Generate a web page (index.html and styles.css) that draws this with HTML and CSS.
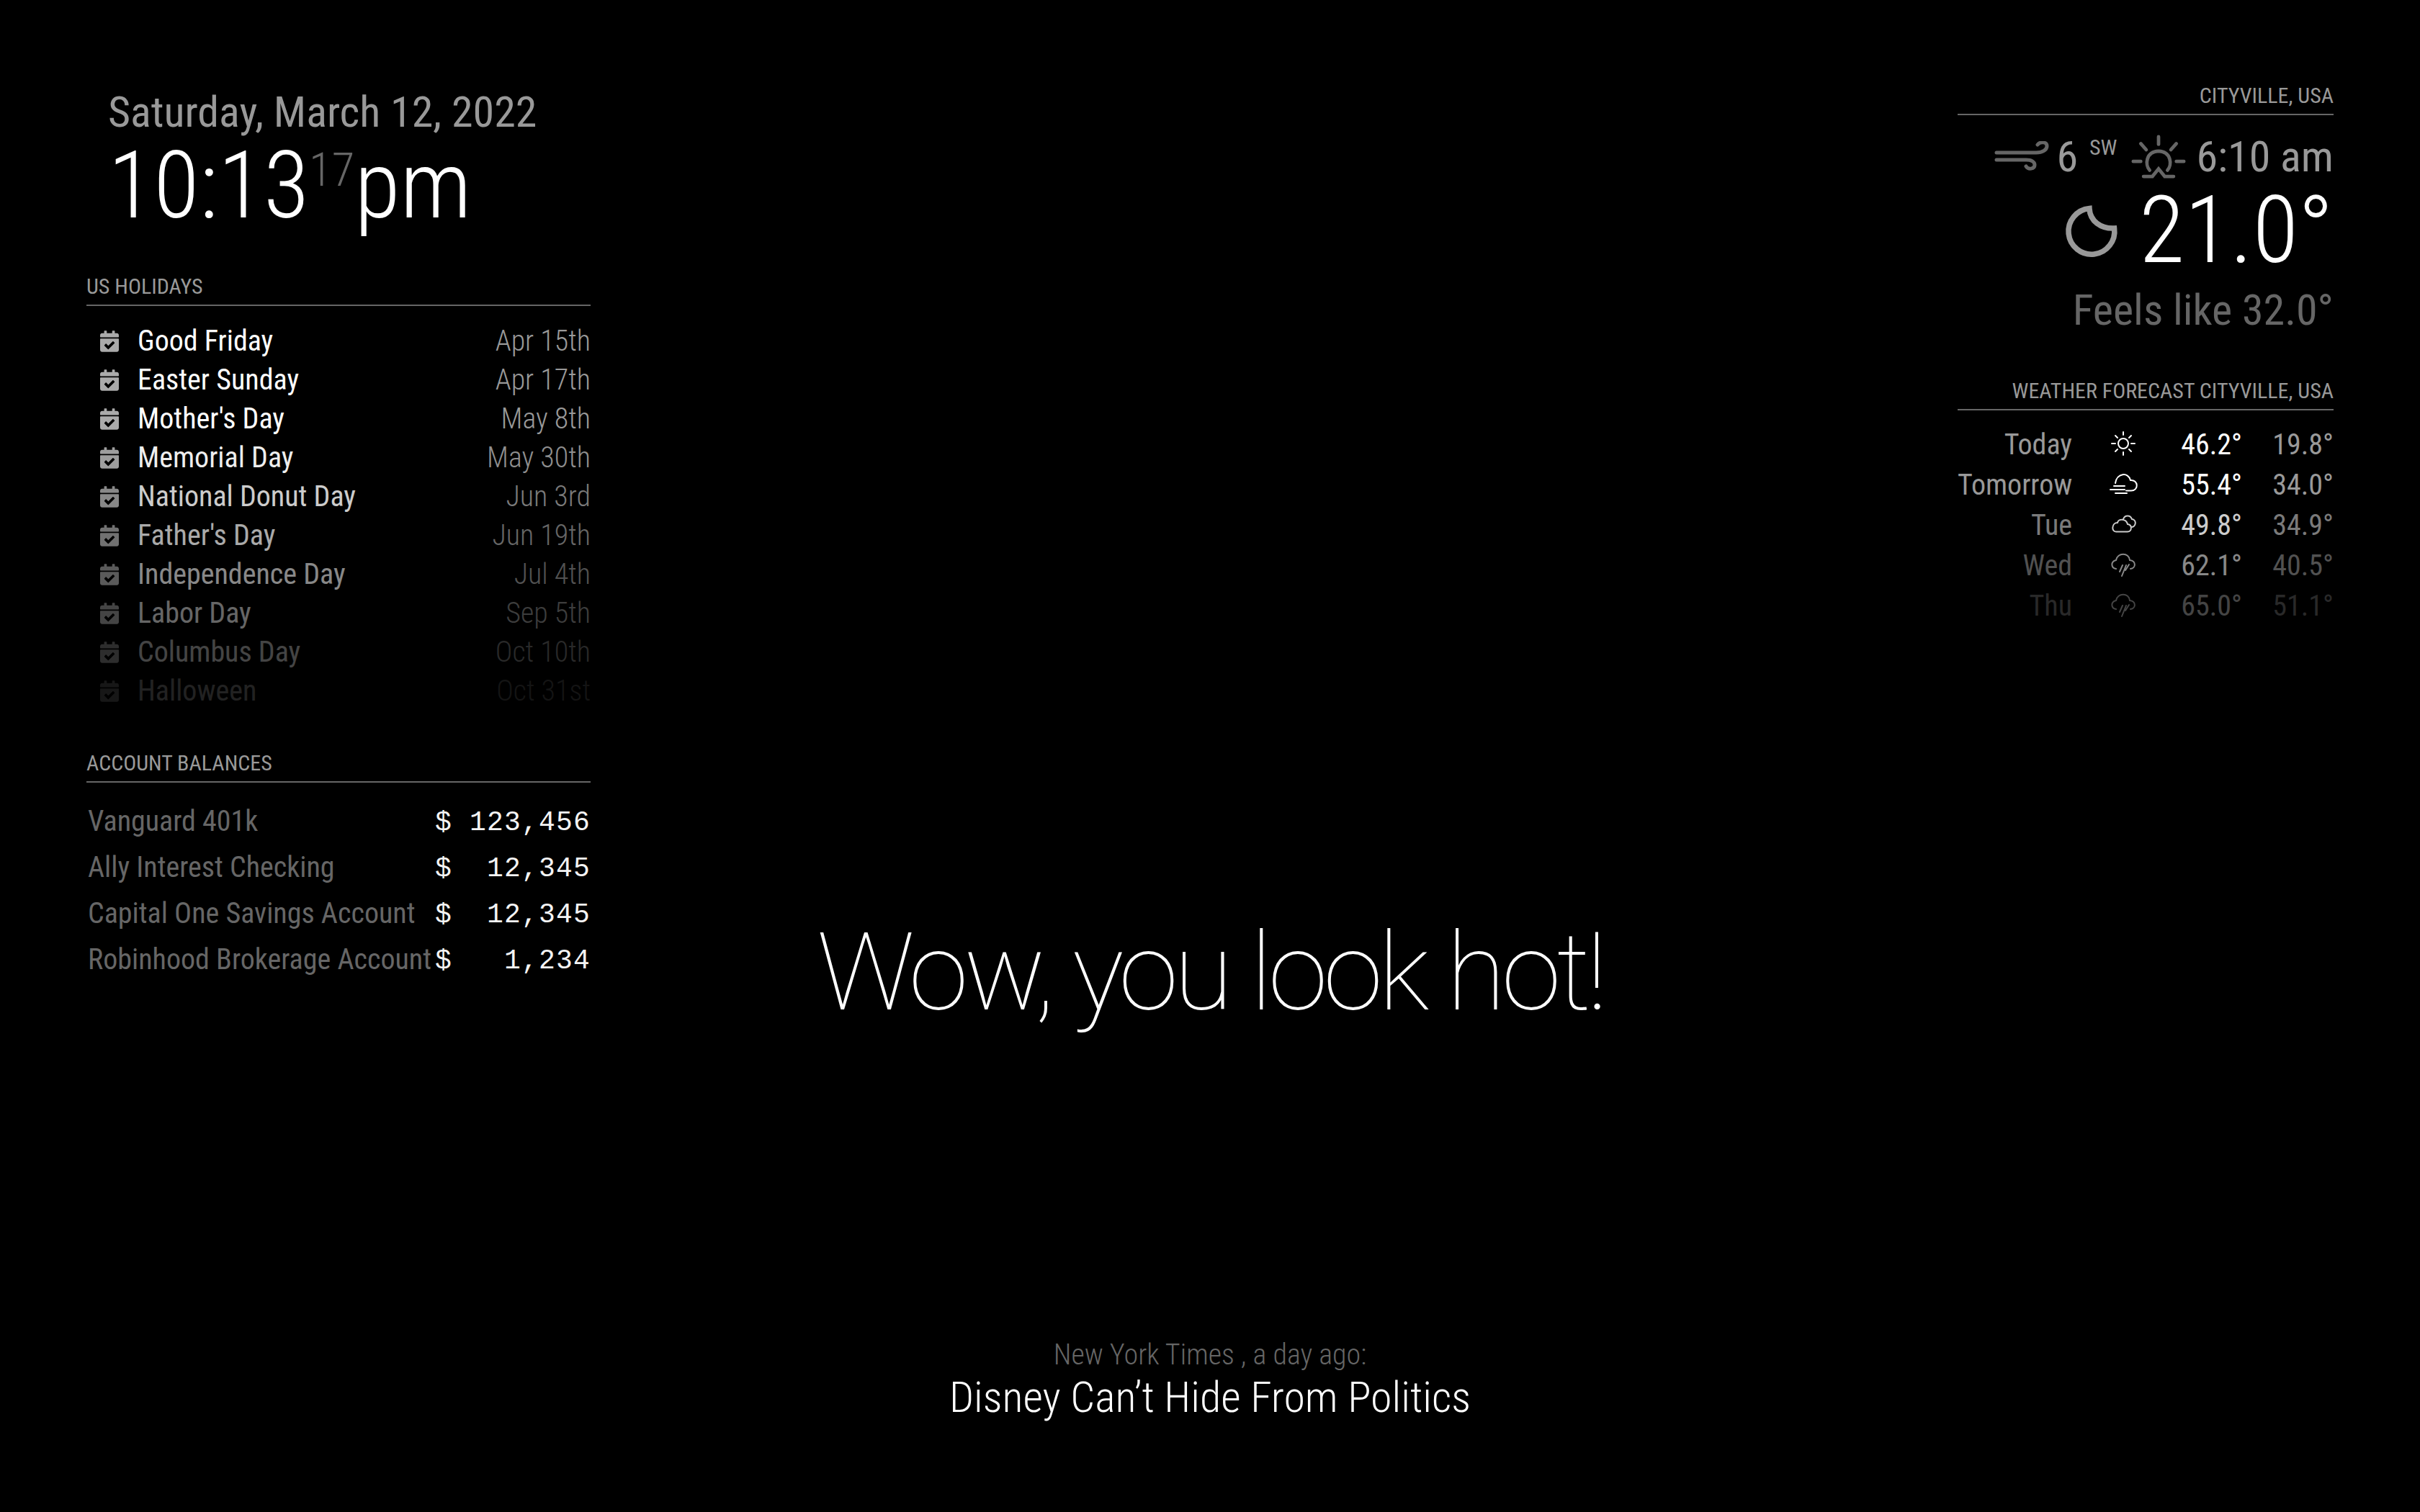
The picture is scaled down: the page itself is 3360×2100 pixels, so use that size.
FILE: index.html
```html
<!DOCTYPE html>
<html lang="en">
<head>
	<meta charset="UTF-8">
	<title>MagicMirror</title>
	<link rel="stylesheet" href="styles.css">
</head>
<body>

<div class="top">
	<div class="left">
		<div class="clock">
			<div class="date">Saturday, March 12, 2022</div>
			<div class="time">10:13<sup class="seconds">17</sup>pm</div>
		</div>

		<div class="module holidays">
			<header>US Holidays</header>
			<div class="row"><svg class="cal" viewBox="0 0 448 512"><use href="#calcheck"/></svg><span class="title">Good Friday</span><span class="when">Apr 15th</span></div>
			<div class="row"><svg class="cal" viewBox="0 0 448 512"><use href="#calcheck"/></svg><span class="title">Easter Sunday</span><span class="when">Apr 17th</span></div>
			<div class="row"><svg class="cal" viewBox="0 0 448 512"><use href="#calcheck"/></svg><span class="title">Mother's Day</span><span class="when">May 8th</span></div>
			<div class="row" style="opacity: .933"><svg class="cal" viewBox="0 0 448 512"><use href="#calcheck"/></svg><span class="title">Memorial Day</span><span class="when">May 30th</span></div>
			<div class="row" style="opacity: .8"><svg class="cal" viewBox="0 0 448 512"><use href="#calcheck"/></svg><span class="title">National Donut Day</span><span class="when">Jun 3rd</span></div>
			<div class="row" style="opacity: .667"><svg class="cal" viewBox="0 0 448 512"><use href="#calcheck"/></svg><span class="title">Father's Day</span><span class="when">Jun 19th</span></div>
			<div class="row" style="opacity: .533"><svg class="cal" viewBox="0 0 448 512"><use href="#calcheck"/></svg><span class="title">Independence Day</span><span class="when">Jul 4th</span></div>
			<div class="row" style="opacity: .4"><svg class="cal" viewBox="0 0 448 512"><use href="#calcheck"/></svg><span class="title">Labor Day</span><span class="when">Sep 5th</span></div>
			<div class="row" style="opacity: .267"><svg class="cal" viewBox="0 0 448 512"><use href="#calcheck"/></svg><span class="title">Columbus Day</span><span class="when">Oct 10th</span></div>
			<div class="row" style="opacity: .133"><svg class="cal" viewBox="0 0 448 512"><use href="#calcheck"/></svg><span class="title">Halloween</span><span class="when">Oct 31st</span></div>
		</div>

		<div class="module accounts">
			<header>Account Balances</header>
			<div class="acct"><span class="acct-name">Vanguard 401k</span><span class="acct-amt">$ 123,456</span></div>
			<div class="acct"><span class="acct-name">Ally Interest Checking</span><span class="acct-amt">$  12,345</span></div>
			<div class="acct"><span class="acct-name">Capital One Savings Account</span><span class="acct-amt">$  12,345</span></div>
			<div class="acct"><span class="acct-name">Robinhood Brokerage Account</span><span class="acct-amt">$   1,234</span></div>
		</div>
	</div>

	<div class="right">
		<div class="module weather">
			<header>Cityville, USA</header>
			<div class="wind-row">
				<svg class="wind" viewBox="0 0 76 44"><path d="M3 16H58C67 16 73 12 73 7C73 1 64 0 60 5M3 26H44C52 26 56 29 56 33C56 39 47 40 44 35"/></svg>
				<span class="speed">6</span><sup class="dir">SW</sup>
				<svg class="sunrise" viewBox="0 0 80 64"><path d="M40 3V14M14 13L22 22M66 13L58 22M3 39H14M66 39H77M27 52C20 44 21 25 40 24C59 25 60 44 53 52M18 61H31L40 50L49 61H62"/></svg>
				<span class="sun-time">6:10 am</span>
			</div>
			<div class="temp-row">
				<svg class="moon" viewBox="0 0 80 80"><path d="M36 5A36 36 0 1 0 75 36C54 37 37 25 36 5Z"/></svg>
				<span class="temp">21.0°</span>
			</div>
			<div class="feels">Feels like 32.0°</div>
		</div>

		<div class="module forecast">
			<header>Weather Forecast Cityville, USA</header>
			<div class="day-row">
				<span class="day">Today</span>
				<svg class="wx" viewBox="0 0 40 40"><circle cx="20" cy="20" r="7"/><path d="M20 4V8M20 32V36M4 20H9M31 20H36M9 9L12 12M28 28L31 31M31 9L28 12M12 28L9 31"/></svg>
				<span class="max">46.2°</span><span class="min">19.8°</span>
			</div>
			<div class="day-row">
				<span class="day">Tomorrow</span>
				<svg class="wx" viewBox="0 0 40 40"><path d="M9 19C11 5 27 3 30 15C41 14 42 29.500 31 29.500H24M2 28H22M7 23H22M9 33H25"/></svg>
				<span class="max">55.4°</span><span class="min">34.0°</span>
			</div>
			<div class="day-row" style="opacity: .8">
				<span class="day">Tue</span>
				<svg class="wx" viewBox="0 0 40 40"><path d="M10 30.500H26C32 30.500 33 21 26 20C24 12 13 12 12 18C4 18 3 30.500 10 30.500ZM20 13C22 7 30 7 32 13C39 14 38 24 31 24"/></svg>
				<span class="max">49.8°</span><span class="min">34.9°</span>
			</div>
			<div class="day-row" style="opacity: .533">
				<span class="day">Wed</span>
				<svg class="wx" viewBox="0 0 40 40"><path d="M10 26C3 25 2 16 10 14C12 3 28 3 29 14C38 15 38 25 30 26M19 21L15 30M24 21L18 36M28 20L23 28"/></svg>
				<span class="max">62.1°</span><span class="min">40.5°</span>
			</div>
			<div class="day-row" style="opacity: .267">
				<span class="day">Thu</span>
				<svg class="wx" viewBox="0 0 40 40"><path d="M10 26C3 25 2 16 10 14C12 3 28 3 29 14C38 15 38 25 30 26M19 21L15 30M24 21L18 36M28 20L23 28"/></svg>
				<span class="max">65.0°</span><span class="min">51.1°</span>
			</div>
		</div>
	</div>
</div>

<div class="compliment">Wow, you look hot!</div>

<div class="news">
	<div class="news-source">New York Times , a day ago:</div>
	<div class="news-title">Disney Can’t Hide From Politics</div>
</div>

<svg class="defs" width="0" height="0"><defs><path id="calcheck" d="M436 160H12c-6.600 0-12-5.400-12-12v-36c0-26.500 21.500-48 48-48h48V12c0-6.600 5.400-12 12-12h40c6.600 0 12 5.400 12 12v52h128V12c0-6.600 5.400-12 12-12h40c6.600 0 12 5.400 12 12v52h48c26.500 0 48 21.500 48 48v36c0 6.600-5.400 12-12 12zM12 192h424c6.600 0 12 5.400 12 12v260c0 26.500-21.500 48-48 48H48c-26.500 0-48-21.500-48-48V204c0-6.600 5.400-12 12-12zm333.300 95.900l-28.200-28.400c-4.700-4.700-12.300-4.800-17-.1L194.900 363.200l-45.900-46.300c-4.700-4.700-12.300-4.800-17-.1l-28.400 28.200c-4.700 4.700-4.800 12.300-.1 17l82.600 83.300c4.700 4.700 12.300 4.800 17 .1l141.700-140.500c4.700-4.700 4.800-12.300 .1-17z"/></defs></svg>

</body>
</html>
```

FILE: styles.css
```css
html, body {
	margin: 0;
	background: #000;
}

body {
	width: 3360px;
	height: 2100px;
	overflow: hidden;
	box-sizing: border-box;
	padding: 0 120px;
	color: #aaa;
	font-family: "Roboto Condensed", Roboto, sans-serif;
	font-stretch: 75%;
	font-weight: 400;
	font-size: 40px;
	line-height: 50px;
}

header {
	text-transform: uppercase;
	font-size: 30px;
	line-height: 30px;
	color: #999;
	border-bottom: 2px solid #666;
	padding-bottom: 10px;
	margin-bottom: 20px;
}

.top {
	display: flex;
	justify-content: space-between;
	height: 1276px;
}

.left {
	width: 700px;
}

.right {
	width: 522px;
	padding-top: 58px;
	text-align: right;
}

.clock {
	padding: 118px 0 0 30px;
}

.date {
	font-size: 60px;
	line-height: 75px;
	color: #999;
}

.time {
	font-size: 130px;
	line-height: 130px;
	font-weight: 300;
	color: #fff;
}

.seconds {
	font-size: 65px;
	line-height: 1;
	color: #666;
	vertical-align: super;
}

.module {
	margin-top: 60px;
}

.holidays header, .accounts header {
	margin-bottom: 22px;
}

.row {
	display: flex;
	align-items: center;
	height: 54px;
}

.cal {
	width: 26px;
	height: 30px;
	margin: 0 26px 0 19px;
	fill: #aaa;
}

.title {
	flex: 1;
	color: #fff;
}

.when {
	font-weight: 300;
	color: #999;
}

.accounts {
	margin-top: 58px;
}

.acct {
	display: flex;
	justify-content: space-between;
	height: 64px;
	align-items: center;
	padding-left: 2px;
}

.acct-name {
	color: #666;
}

.acct-amt {
	font-family: "Liberation Mono", monospace;
	font-stretch: 100%;
	font-size: 38px;
	letter-spacing: 1.2px;
	white-space: pre;
	color: #f4f4f4;
	margin-top: 3px;
}

.wind-row, .temp-row, .feels {
	display: flex;
	justify-content: flex-end;
	align-items: center;
}

.wind-row {
	font-size: 60px;
	line-height: 75px;
	color: #999;
}

.wind, .sunrise, .moon {
	fill: none;
	stroke-linecap: round;
}

.wind {
	width: 76px;
	height: 44px;
	stroke: #666;
	stroke-width: 5;
	margin-right: 10px;
}

.dir {
	font-size: 30px;
	line-height: 30px;
	color: #999;
	align-self: flex-start;
	margin: 10px 20px 0 16px;
}

.sunrise {
	width: 76px;
	height: 61px;
	stroke: #666;
	stroke-width: 5;
	margin-right: 14px;
}

.temp-row {
	font-size: 130px;
	line-height: 130px;
	font-weight: 300;
	color: #fff;
}

.moon {
	width: 71px;
	height: 71px;
	overflow: visible;
	stroke: #999;
	stroke-width: 8.500;
	margin-right: 30px;
}

.feels {
	font-size: 60px;
	line-height: 75px;
	color: #666;
	margin-top: 8px;
}

.forecast {
	margin-top: 60px;
}

.day-row {
	display: grid;
	grid-template-columns: 159px 142px 1fr 127px;
	height: 56px;
	align-items: center;
	text-align: right;
	color: #999;
}

.wx {
	width: 40px;
	height: 40px;
	justify-self: center;
	margin-bottom: 5px;
	fill: none;
	stroke: #fff;
	stroke-width: 2;
	stroke-linecap: round;
}

.max {
	color: #fff;
}

.compliment {
	text-align: center;
	font-family: Roboto, sans-serif;
	font-stretch: 100%;
	font-weight: 100;
	font-size: 150px;
	line-height: 150px;
	letter-spacing: -6px;
	color: #fff;
}

.news {
	margin-top: 431px;
	text-align: center;
}

.news-source {
	font-weight: 300;
	color: #666;
}

.news-title {
	font-size: 60px;
	line-height: 75px;
	font-weight: 300;
	color: #fff;
	margin-top: -4px;
}

.defs {
	position: absolute;
}
```
